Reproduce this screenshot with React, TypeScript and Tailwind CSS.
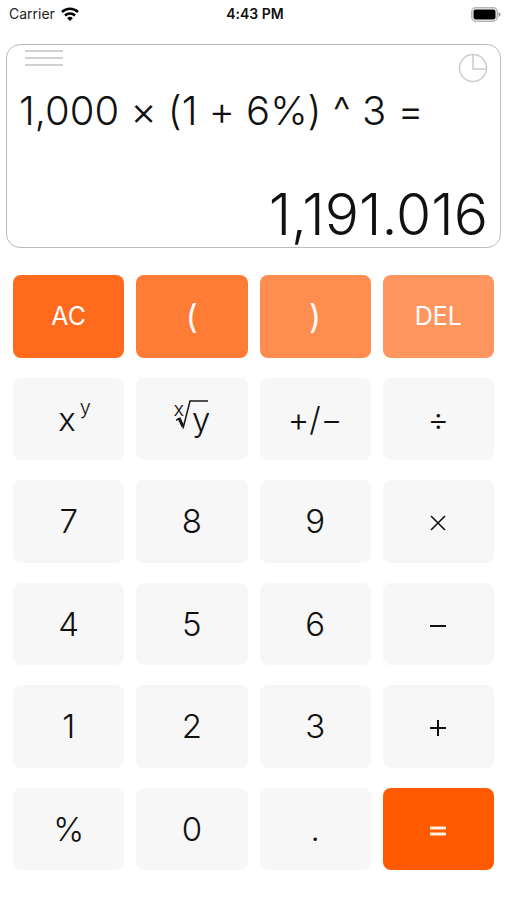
import { useState } from "react"
import type { ReactNode } from "react"

type Key = {
  id: string
  label: ReactNode
  name?: string
  className?: string
}

const PLAIN = "bg-[#f7f7f7] text-[#111] text-[33px] font-light"

function Root() {
  return (
    <span className="flex items-center">
      <span className="mb-5 text-xl">x</span>
      <span className="relative -ml-2 flex pl-4">
        <svg className="absolute left-0 -top-1" width="32" height="38" viewBox="0 0 32 38" fill="none" stroke="#1a1a1a" aria-hidden="true">
          <path d="M0 25.5L3.5 23" strokeWidth="1.5" />
          <path d="M3 23L7 31.5" strokeWidth="3" />
          <path d="M7 33.5L14 6H32" strokeWidth="1.5" />
        </svg>
        y
      </span>
    </span>
  )
}

function Sign({ d, width = 2 }: { d: string; width?: number }) {
  return (
    <svg className="mt-1" width="18" height="18" viewBox="0 0 18 18" fill="none" stroke="currentColor" strokeWidth={width} aria-hidden="true">
      <path d={d} />
    </svg>
  )
}

const keys: Key[] = [
  { id: "ac", label: "AC", className: "bg-[#ff6a1c] text-white text-[25px]" },
  { id: "(", label: "(", className: "bg-[#ff7c36] text-white text-[33px]" },
  { id: ")", label: ")", className: "bg-[#ff8d50] text-white text-[33px]" },
  { id: "del", label: "DEL", className: "bg-[#ff955f] text-white text-[25px]" },
  {
    id: "pow",
    name: "x to the power y",
    label: (
      <span className="flex items-center pl-3">
        x<sup className="top-0 mb-6 ml-1 text-xl">y</sup>
      </span>
    ),
  },
  { id: "root", label: <Root />, name: "x-th root of y" },
  { id: "sign", label: "+/−", name: "change sign" },
  { id: "÷", label: "÷" },
  { id: "7", label: "7" },
  { id: "8", label: "8" },
  { id: "9", label: "9" },
  { id: "×", label: <Sign d="M2 2L16 16M16 2L2 16" width={1.6} />, name: "multiply" },
  { id: "4", label: "4" },
  { id: "5", label: "5" },
  { id: "6", label: "6" },
  { id: "−", label: <Sign d="M1 9H17" />, name: "minus" },
  { id: "1", label: "1" },
  { id: "2", label: "2" },
  { id: "3", label: "3" },
  { id: "+", label: <Sign d="M1 9H17M9 1V17" />, name: "plus" },
  { id: "%", label: "%" },
  { id: "0", label: "0" },
  { id: ".", label: "." },
  {
    id: "=",
    label: <Sign d="M1 6H17M1 12H17" width={3} />,
    name: "equals",
    className: "bg-[#ff5a00] text-[#fff0e0]",
  },
]

function StatusBar() {
  return (
    <header className="grid h-7 grid-cols-3 items-center pl-[9px] pr-1.5 text-sm">
      <div className="flex items-center gap-1.5 text-[#222]">
        <span>Carrier</span>
        <svg width="18" height="14" viewBox="0 0 18 14" fill="none" stroke="#000" strokeWidth="2.6" aria-label="Wi-Fi">
          <path d="M1 5A11.5 11.5 0 0 1 17 5" />
          <path d="M4 8.5A7.2 7.2 0 0 1 14 8.5" />
          <path d="M9 14L6.2 11.2A4 4 0 0 1 11.8 11.2Z" fill="#000" stroke="none" />
        </svg>
      </div>
      <span className="text-center font-semibold text-[#111]">4:43 PM</span>
      <svg className="justify-self-end" width="30" height="15" viewBox="0 0 30 15" aria-label="Battery">
        <rect x="0.8" y="0.8" width="25.4" height="13.4" rx="4" fill="#fff" stroke="#b5b5b5" strokeWidth="1.5" />
        <rect x="2.5" y="2.5" width="22" height="10" rx="2" fill="#000" />
        <path d="M27.5 5.2Q29.6 5.8 29.6 7.5T27.5 9.8Z" fill="#999" />
      </svg>
    </header>
  )
}

export default function App() {
  const [expression, setExpression] = useState("1,000 × (1 + 6%) ^ 3 =")
  const [result, setResult] = useState("1,191.016")

  const handleKey = (id: string) => {
    if (id === "ac") {
      setExpression("")
      setResult("0")
    } else if (id === "del") {
      setExpression((prev) => prev.slice(0, -1).trimEnd())
    } else if (id === "pow") {
      setExpression((prev) => prev + " ^ ")
    } else if (id === "root") {
      setExpression((prev) => prev + " √ ")
    } else if (id === "sign") {
      setExpression((prev) => (prev.startsWith("−") ? prev.slice(1) : "−" + prev))
    } else if ("÷×−+=".includes(id)) {
      setExpression((prev) => prev + " " + id + " ")
    } else {
      setExpression((prev) => prev + id)
    }
  }

  return (
    <div className="flex min-h-screen flex-col bg-white font-[Inter,'Liberation_Sans',sans-serif] [font-feature-settings:'calt'_0]">
      <StatusBar />

      <section className="mx-1.5 mt-4 flex h-[204px] flex-col rounded-[14px] border border-[#bbb] px-3 text-[#111]">
        <div className="flex items-start justify-between pl-1.5">
          <button type="button" aria-label="Menu" className="pt-1">
            <svg width="38" height="18" viewBox="0 0 38 18" stroke="#c4c4c4" strokeWidth="1.5">
              <path d="M0 2H38M0 9H38M0 16H38" />
            </svg>
          </button>
          <button type="button" aria-label="History" className="pt-2">
            <svg width="30" height="30" viewBox="0 0 30 30" fill="none" stroke="#ccc" strokeWidth="1.5">
              <circle cx="15" cy="15" r="13.5" />
              <path d="M15 1.5V16H28.5" />
            </svg>
          </button>
        </div>
        <p className="mt-1 h-12 text-[40px] leading-[48px] font-light whitespace-pre">{expression}</p>
        <output className="mt-auto text-right text-[57px] leading-16 font-light">{result}</output>
      </section>

      <main className="mx-[13px] mt-[27px] mb-[30px] grid flex-1 auto-rows-fr grid-cols-4 gap-x-3 gap-y-5">
        {keys.map((key) => (
          <button
            key={key.id}
            type="button"
            aria-label={key.name}
            onClick={() => handleKey(key.id)}
            className={`flex items-center justify-center rounded-lg leading-10 ${key.className ?? PLAIN}`}
          >
            {key.label}
          </button>
        ))}
      </main>
    </div>
  )
}
